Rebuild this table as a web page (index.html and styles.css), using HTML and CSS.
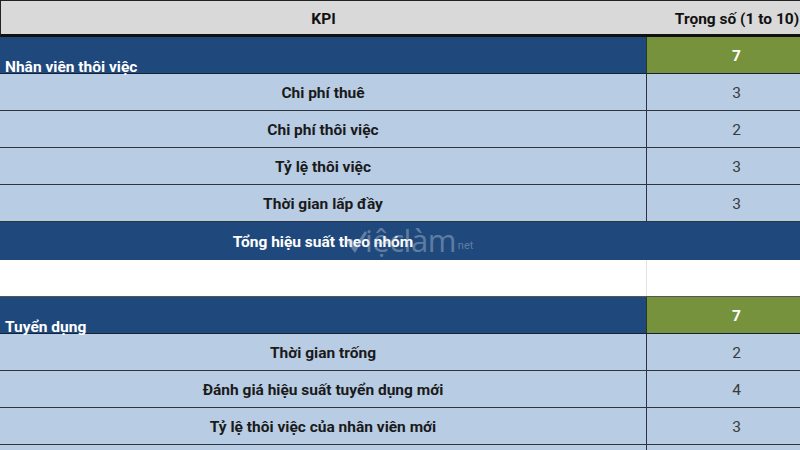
FILE: index.html
```html
<!DOCTYPE html>
<html lang="vi">
<head>
<meta charset="utf-8">
<title>KPI</title>
<link rel="stylesheet" href="styles.css">
</head>
<body>
<div class="sheet">
  <div class="row head">
    <div class="cell kpi">KPI</div>
    <div class="cell weight">Trọng số (1 to 10)</div>
  </div>

  <div class="row group">
    <div class="cell title">Nhân viên thôi việc</div>
    <div class="cell gval">7</div>
  </div>
  <div class="row item"><div class="cell name">Chi phí thuê</div><div class="cell val">3</div></div>
  <div class="row item"><div class="cell name">Chi phí thôi việc</div><div class="cell val">2</div></div>
  <div class="row item"><div class="cell name">Tỷ lệ thôi việc</div><div class="cell val">3</div></div>
  <div class="row item"><div class="cell name">Thời gian lấp đầy</div><div class="cell val">3</div></div>
  <div class="row total">
    <div class="cell total-name">Tổng hiệu suất theo nhóm</div>
    <div class="watermark">
      <svg class="wm-check" width="24" height="24" viewBox="0 0 24 24"><path d="M1 10 L8 9 L11 16 L21 1 L23 3 L11 23 Z" fill="currentColor"/></svg>
      <span class="wm-text">iệclàm</span><span class="wm-net">net</span>
    </div>
  </div>
  <div class="row blank"><div class="cell"></div><div class="cell"></div></div>

  <div class="row group">
    <div class="cell title">Tuyển dụng</div>
    <div class="cell gval">7</div>
  </div>
  <div class="row item"><div class="cell name">Thời gian trống</div><div class="cell val">2</div></div>
  <div class="row item"><div class="cell name">Đánh giá hiệu suất tuyển dụng mới</div><div class="cell val">4</div></div>
  <div class="row item"><div class="cell name">Tỷ lệ thôi việc của nhân viên mới</div><div class="cell val">3</div></div>
  <div class="row item"><div class="cell name"></div><div class="cell val"></div></div>
</div>
</body>
</html>
```

FILE: styles.css
```css
html, body {
  margin: 0;
  padding: 0;
  overflow: hidden;
  background: #ffffff;
}
.sheet {
  width: 826px;
  font-family: Roboto, "Liberation Sans", sans-serif;
  font-size: 15.5px;
  position: relative;
}
.row {
  display: grid;
  grid-template-columns: 646px 180px;
  height: 37px;
  box-sizing: border-box;
}
.cell {
  display: flex;
  align-items: center;
  justify-content: center;
  box-sizing: border-box;
  padding-top: 2px;
}
.head {
  background: #d9d9d9;
  border-top: 1px solid #222;
  border-left: 1px solid #222;
  border-bottom: 3px solid #111;
  font-weight: 700;
  color: #111;
}
.head .kpi { padding-right: 1px; }
.group {
  background: #1f497d;
  border-bottom: 1px solid #15233a;
  color: #fff;
  font-weight: 700;
}
.group .title {
  justify-content: flex-start;
  align-items: flex-end;
  padding-left: 5px;
  padding-top: 0;
  line-height: 12px;
}
.gval {
  background: #76923c;
  border-left: 1px solid #2a3a1a;
}
.item {
  background: #b8cce4;
  border-bottom: 1px solid #2b3440;
  color: #1a1a1a;
}
.item .name {
  font-weight: 700;
}
.item .val {
  border-left: 1px solid #2b3440;
  font-weight: 400;
  color: #3a3a3a;
}
.total {
  display: flex;
  background: #1f497d;
  height: 38px;
  position: relative;
}
.total-name {
  width: 646px;
  color: #fff;
  font-weight: 700;
}
.watermark {
  position: absolute;
  left: 344px;
  top: 4px;
  display: flex;
  align-items: flex-end;
  color: rgba(200, 208, 220, 0.4);
  pointer-events: none;
}
.wm-check { display: block; margin-right: -3px; }
.wm-text {
  font-family: "Open Sans", Roboto, sans-serif;
  font-size: 31px;
  line-height: 28px;
  font-weight: 400;
  letter-spacing: -0.5px;
}
.wm-net {
  font-size: 11px;
  line-height: 16px;
  margin-left: 2px;
}
.blank {
  background: #ffffff;
  border-bottom: 1px solid #555;
}
.blank .cell:last-child {
  border-left: 1px solid #e3e3e3;
}
```
